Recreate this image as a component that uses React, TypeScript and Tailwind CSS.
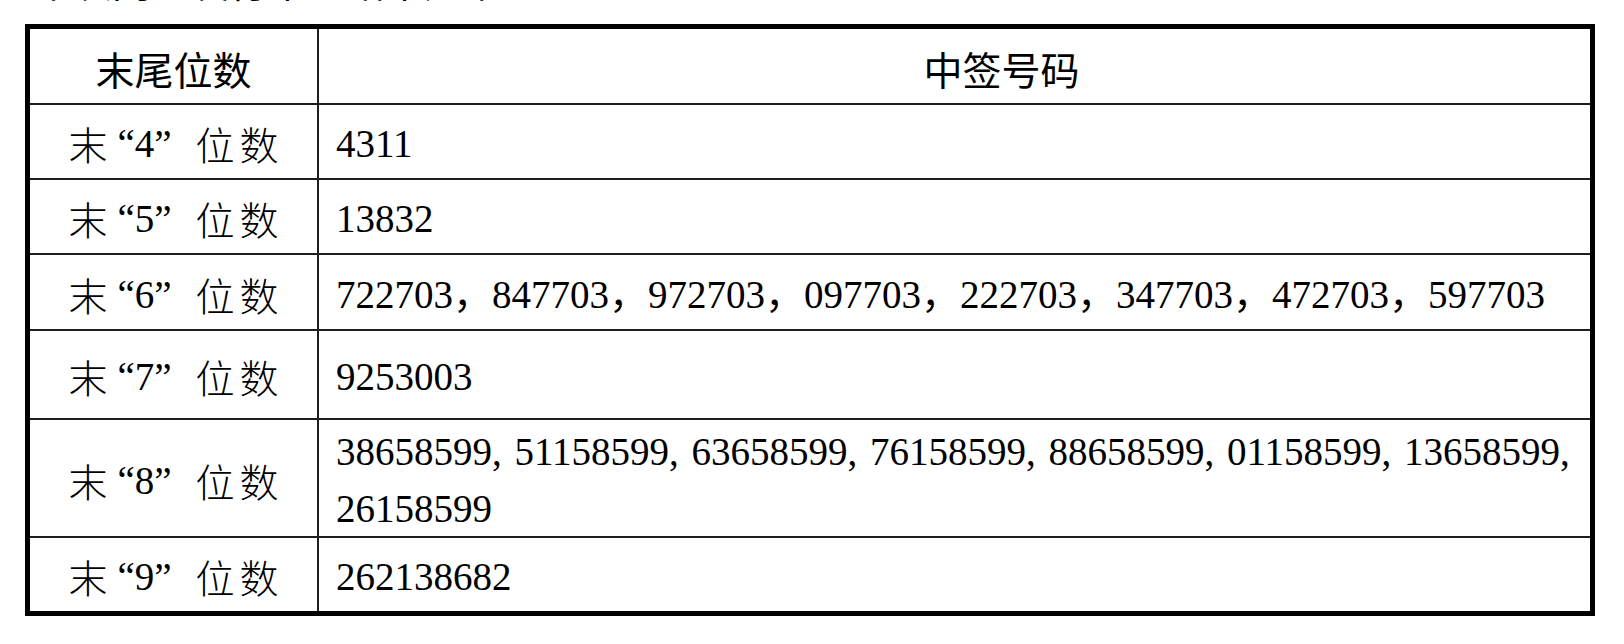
const serif = "font-['Liberation_Serif','Noto_Sans_CJK_SC',serif]";
const cjk = "font-['Noto_Sans_CJK_SC',sans-serif]";

const rows = [
  { digit: "4", lines: ["4311"], h: "h-[75px]" },
  { digit: "5", lines: ["13832"], h: "h-[75px]" },
  {
    digit: "6",
    lines: ["722703，847703，972703，097703，222703，347703，472703，597703"],
    h: "h-[76px]",
  },
  { digit: "7", lines: ["9253003"], h: "h-[89px]" },
  {
    digit: "8",
    lines: [
      "38658599, 51158599, 63658599, 76158599, 88658599, 01158599, 13658599,",
      "26158599",
    ],
    h: "h-[118px]",
  },
  { digit: "9", lines: ["262138682"], h: "h-[73px]", last: true },
];

function Label({ digit }: { digit: string }) {
  return (
    <span className="flex items-center text-[39px] leading-none text-black">
      <span className={`${cjk} font-light`}>末</span>
      <span className={`${serif} ml-[10px]`}>“{digit}”</span>
      <span className={`${cjk} ml-[24px] font-light`}>位</span>
      <span className={`${cjk} ml-[5px] font-light`}>数</span>
    </span>
  );
}

export default function App() {
  return (
    <div className="h-[644px] w-[1624px] overflow-hidden bg-white">
      {/* caption line above the table, scrolled mostly out of view */}
      <div className="h-[24px] overflow-hidden pl-[34px]">
        <p className={`-mt-[39px] ${cjk} text-[39px] leading-[39px] text-black`}>
          本次网上发行中签结果如下
        </p>
      </div>

      <div className="ml-[25px] w-[1570px] border-[5px] border-black">
        <div className="flex h-[76px] border-b-2 border-[#1e1e1e]">
          <div
            className={`flex w-[289px] items-center justify-center border-r-2 border-[#1e1e1e] pt-[4px] ${cjk} text-[39px] leading-none`}
          >
            末尾位数
          </div>
          <div
            className={`flex flex-1 items-center justify-center pl-[94px] pt-[4px] ${cjk} text-[39px] leading-none`}
          >
            中签号码
          </div>
        </div>

        {rows.map((row) => (
          <div
            key={row.digit}
            className={`flex ${row.h} ${row.last ? "" : "border-b-2 border-[#1e1e1e]"}`}
          >
            <div className="flex w-[289px] items-center justify-center border-r-2 border-[#1e1e1e] pt-[4px]">
              <Label digit={row.digit} />
            </div>
            <div
              className={`flex flex-1 flex-col justify-center pl-[17px] pt-[4px] ${serif} text-[39px] leading-[57px] text-black [word-spacing:3px]`}
            >
              {row.lines.map((line) => (
                <div key={line} className="whitespace-nowrap">
                  {line}
                </div>
              ))}
            </div>
          </div>
        ))}
      </div>
    </div>
  );
}
